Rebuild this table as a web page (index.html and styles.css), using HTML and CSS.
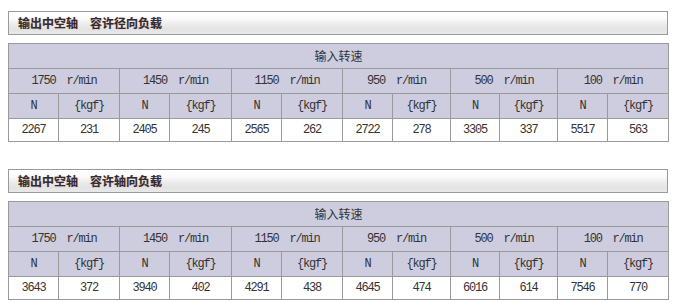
FILE: index.html
```html
<!DOCTYPE html>
<html lang="zh-CN">
<head>
<meta charset="utf-8">
<title>输出中空轴 容许负载</title>
<link rel="stylesheet" href="styles.css">
</head>
<body>
<div class="page">
  <section class="block">
    <h2 class="title">输出中空轴　容许径向负载</h2>
    <table class="spec">
      <colgroup>
        <col class="c50"><col class="c61"><col class="c50"><col class="c62"><col class="c50"><col class="c61">
        <col class="c50"><col class="c58"><col class="c49"><col class="c58"><col class="c50"><col class="c61">
      </colgroup>
      <tr class="hd"><td colspan="12" class="cap">输入转速</td></tr>
      <tr class="hd">
        <td colspan="2">1750　r/min</td><td colspan="2">1450　r/min</td><td colspan="2">1150　r/min</td>
        <td colspan="2">950　r/min</td><td colspan="2">500　r/min</td><td colspan="2">100　r/min</td>
      </tr>
      <tr class="hd">
        <td>N</td><td>{kgf}</td><td>N</td><td>{kgf}</td><td>N</td><td>{kgf}</td>
        <td>N</td><td>{kgf}</td><td>N</td><td>{kgf}</td><td>N</td><td>{kgf}</td>
      </tr>
      <tr class="dt">
        <td>2267</td><td>231</td><td>2405</td><td>245</td><td>2565</td><td>262</td>
        <td>2722</td><td>278</td><td>3305</td><td>337</td><td>5517</td><td>563</td>
      </tr>
    </table>
  </section>
  <section class="block second">
    <h2 class="title">输出中空轴　容许轴向负载</h2>
    <table class="spec">
      <colgroup>
        <col class="c50"><col class="c61"><col class="c50"><col class="c62"><col class="c50"><col class="c61">
        <col class="c50"><col class="c58"><col class="c49"><col class="c58"><col class="c50"><col class="c61">
      </colgroup>
      <tr class="hd"><td colspan="12" class="cap">输入转速</td></tr>
      <tr class="hd">
        <td colspan="2">1750　r/min</td><td colspan="2">1450　r/min</td><td colspan="2">1150　r/min</td>
        <td colspan="2">950　r/min</td><td colspan="2">500　r/min</td><td colspan="2">100　r/min</td>
      </tr>
      <tr class="hd">
        <td>N</td><td>{kgf}</td><td>N</td><td>{kgf}</td><td>N</td><td>{kgf}</td>
        <td>N</td><td>{kgf}</td><td>N</td><td>{kgf}</td><td>N</td><td>{kgf}</td>
      </tr>
      <tr class="dt">
        <td>3643</td><td>372</td><td>3940</td><td>402</td><td>4291</td><td>438</td>
        <td>4645</td><td>474</td><td>6016</td><td>614</td><td>7546</td><td>770</td>
      </tr>
    </table>
  </section>
</div>
</body>
</html>
```
FILE: styles.css
```css
html, body {
  margin: 0;
  padding: 0;
  background: #fff;
}
.page {
  padding: 11px 8px 0 8px;
  width: 660px;
}
.block {
  display: flex;
  flex-direction: column;
  gap: 8px;
}
.second {
  margin-top: 27px;
}
.title {
  box-sizing: border-box;
  margin: 0;
  height: 24px;
  border: 1px solid #9a9a9a;
  padding: 0 0 0 9px;
  font-family: "Noto Sans CJK SC", sans-serif;
  font-size: 12px;
  font-weight: bold;
  line-height: 21px;
  color: #3a2a2a;
  text-shadow: 0 0 1px rgba(60, 40, 80, 0.35);
  background: linear-gradient(to bottom, #ffffff 0%, #fbfbfb 30%, #ececec 55%, #e3e3e3 80%, #e9e9e9 100%);
}
.spec {
  width: 660px;
  table-layout: fixed;
  border-collapse: collapse;
  border: 1px solid #999;
  font-family: "Liberation Mono", "Noto Sans CJK SC", monospace;
  font-size: 12px;
  letter-spacing: -1.2px;
  color: #333;
}
.spec td {
  border: 1px solid #9a9a9a;
  text-align: center;
  padding: 0;
  line-height: 14px;
}
.hd td {
  background: #cdcddf;
  height: 24px;
}
.dt td {
  background: #fff;
  height: 22px;
}
.cap {
  font-family: "Noto Sans CJK SC", sans-serif;
  font-size: 12px;
  letter-spacing: 0;
}
.c50 { width: 50px; }
.c49 { width: 49px; }
.c58 { width: 58px; }
.c61 { width: 61px; }
.c62 { width: 62px; }
```
